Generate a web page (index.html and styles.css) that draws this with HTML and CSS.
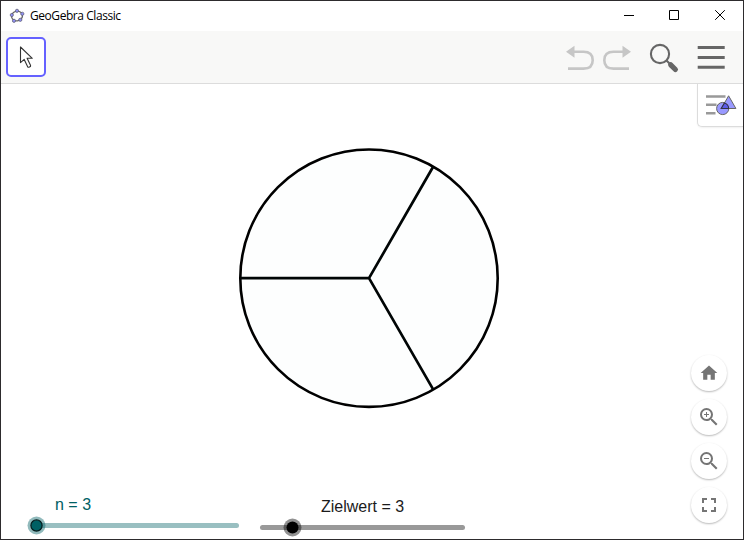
FILE: index.html
```html
<!DOCTYPE html>
<html lang="de">
<head>
<meta charset="utf-8">
<title>GeoGebra Classic</title>
<link rel="stylesheet" href="styles.css">
</head>
<body>
<div class="window">
  <header class="titlebar">
    <svg class="app-icon" width="16" height="16" viewBox="0 0 16 16">
      <ellipse cx="8" cy="8" rx="5.500" ry="4.800" fill="none" stroke="#666" stroke-width="1.300" transform="rotate(-15 8 8)"/>
      <g fill="#9090f5" stroke="#62627a" stroke-width=".8"><circle cx="8" cy="2.800" r="1.600"/><circle cx="13.300" cy="5.800" r="1.600"/><circle cx="11.300" cy="11.800" r="1.600"/><circle cx="5" cy="12.800" r="1.600"/><circle cx="2.800" cy="7" r="1.600"/></g>
    </svg>
    <span class="app-title">GeoGebra Classic</span>
    <svg class="window-controls" width="138" height="30" viewBox="605 1 138 30" fill="none" stroke="#000">
      <path d="M624 15.500h10M669.500 10.500h9v9h-9z"/>
      <path d="m715.200 10.200 9.600 9.600m0-9.600-9.600 9.600"/>
    </svg>
  </header>
  <nav class="toolbar">
    <button class="tool" aria-label="Bewegen">
      <svg width="36" height="36" viewBox="8 39 36 36"><path d="M20.500 47v15.600l3.700-3.200 3.600 7.600c.4.800 3.200-.4 2.800-1.400l-3.500-7.300h5.200Z" fill="#fff" stroke="#333" stroke-width="1.100" stroke-linejoin="round"/></svg>
    </button>
    <svg class="toolbar-actions" width="177" height="52" viewBox="566 31 177 52" fill="none">
      <g stroke="#c6c6c6" stroke-width="2.600"><path d="M573 51.800h10.500c6.500 0 9.200 2.700 9.200 8.400s-2.700 8.400-9.200 8.400h-15.500"/><path d="M624 51.800h-10.500c-6.500 0-9.200 2.700-9.200 8.400s2.700 8.400 9.200 8.400h15.500"/></g>
      <path d="m566 51.700 8.500-6v12zM631 51.700l-8.500-6v12z" fill="#c6c6c6"/>
      <g stroke="#666"><circle cx="660" cy="54" r="9.100" stroke-width="2.100"/><path d="m666.500 60.500 4 4" stroke-width="2.200"/><path d="m670.700 64.800 4.700 4.700" stroke-width="5.200" stroke-linecap="round"/><path d="M697.700 47.600h27M697.700 57.500h27M697.700 67.200h27" stroke-width="3"/></g>
    </svg>
  </nav>
  <main class="canvas">
    <svg class="drawing" width="742" height="455" viewBox="1 84 742 455">
      <circle cx="369" cy="278.200" r="128.700" fill="#fdfefe" stroke="#000" stroke-width="2.600"/>
      <path d="M240.500 278.200H369L433.300 166.500M369 278.200l64.300 111.500" fill="none" stroke="#000505" stroke-width="2.700" stroke-linejoin="round"/>
      <g class="slider-label"><text x="55" y="510" fill="#006064">n = 3</text><text x="321" y="512" fill="#1b1b1b">Zielwert = 3</text></g>
      <g stroke-width="5" stroke-linecap="round"><path d="M36.500 525.500h200" stroke="#99bfc1"/><path d="M262.500 527.500h200" stroke="#999"/></g>
      <circle cx="36.500" cy="525.500" r="9" fill="#006064" fill-opacity=".43"/>
      <circle cx="36.500" cy="525.500" r="5.600" fill="#006064" stroke="#041c1d" stroke-width="1.200"/>
      <circle cx="292.500" cy="527.500" r="9" fill="#000" fill-opacity=".43"/>
      <circle cx="292.500" cy="527.500" r="6" fill="#000"/>
    </svg>
    <button class="style-button" aria-label="Stil">
      <svg width="44" height="42" viewBox="699 84 44 42">
        <path d="M706 96.400h19.500M706 104.700h10.500M706 113.300h9.500" stroke="#999" stroke-width="2.500"/>
        <circle cx="722.700" cy="108.500" r="6.100" fill="#99f" stroke="#666"/>
        <path d="m728.600 95.800 7.300 12.700h-14.600Z" fill="#99f" stroke="#666"/>
        <path d="M724.500 103a6 6 0 0 1 4.200 5.500h-7.500Z" fill="#5c5ce8" stroke="#334" stroke-width="1.100"/>
      </svg>
    </button>
    <div class="zoom-panel">
      <button class="round" aria-label="Standardansicht"><svg width="20" height="20" viewBox="0 0 24 24"><path d="M10 20v-6h4v6h5v-8h3L12 3 2 12h3v8z"/></svg></button>
      <button class="round" aria-label="Vergrößern"><svg width="24" height="24" viewBox="0 0 24 24"><path d="M15.500 14h-.79l-.28-.27A6.470 6.470 0 0 0 16 9.500 6.500 6.500 0 1 0 9.500 16c1.610 0 3.090-.59 4.230-1.570l.27.280v.79l5 4.990L20.490 19zm-6 0C7.010 14 5 11.990 5 9.500S7.010 5 9.500 5 14 7.010 14 9.500 11.990 14 9.500 14zM12 10h-2v2H9v-2H7V9h2V7h1v2h2z"/></svg></button>
      <button class="round" aria-label="Verkleinern"><svg width="24" height="24" viewBox="0 0 24 24"><path d="M15.500 14h-.79l-.28-.27A6.470 6.470 0 0 0 16 9.500 6.500 6.500 0 1 0 9.500 16c1.610 0 3.090-.59 4.230-1.570l.27.280v.79l5 4.990L20.490 19zm-6 0C7.010 14 5 11.990 5 9.500S7.010 5 9.500 5 14 7.010 14 9.500 11.990 14 9.500 14zM7 9h5v1H7z"/></svg></button>
      <button class="round" aria-label="Vollbild"><svg width="24" height="24" viewBox="0 0 24 24"><path d="M7 14H5v5h5v-2H7zM5 10h2V7h3V5H5zm12 7h-3v2h5v-5h-2zM14 5v2h3v3h2V5z"/></svg></button>
    </div>
  </main>
</div>
</body>
</html>
```
FILE: styles.css
```css
* { box-sizing: border-box; }
body { margin: 0; }
svg { display: block; flex: none; }
button { padding: 0; border: 0; background: #fff; }

.window {
  display: flex;
  flex-direction: column;
  width: 744px;
  height: 540px;
  border: 1px solid #2d2b2d;
  background: #fff;
  overflow: hidden;
}

.titlebar {
  display: flex;
  align-items: center;
  height: 30px;
  padding-left: 8px;
}

.app-title {
  margin: -1px 0 0 5px;
  font: 12px "Open Sans", "Noto Sans", sans-serif;
  letter-spacing: -0.44px;
  color: #000;
}

.window-controls { margin-left: auto; }

.toolbar {
  display: flex;
  align-items: center;
  justify-content: space-between;
  height: 53px;
  padding-left: 5px;
  background: #f8f8f7;
  border-bottom: 1px solid #dcdcdc;
}

.tool {
  width: 40px;
  height: 40px;
  border: 2px solid #6561ff;
  border-radius: 5px;
}

.canvas {
  position: relative;
  flex: 1;
}

.slider-label { font: 16px "Liberation Sans", Arial, sans-serif; }

.style-button {
  position: absolute;
  top: 0;
  right: 0;
  width: 46px;
  height: 43px;
  padding-left: 1px;
  border: solid #dcdcdc;
  border-width: 0 0 1px 1px;
  border-bottom-left-radius: 5px;
  box-shadow: 0 1px 2px rgba(0, 0, 0, 0.06);
}

.zoom-panel {
  position: absolute;
  right: 16px;
  bottom: 16px;
  display: flex;
  flex-direction: column;
  gap: 8px;
}

.round {
  display: flex;
  align-items: center;
  justify-content: center;
  width: 36px;
  height: 36px;
  border-radius: 50%;
  box-shadow: 0 1px 2px rgba(0, 0, 0, 0.28);
  fill: #757575;
}
```
